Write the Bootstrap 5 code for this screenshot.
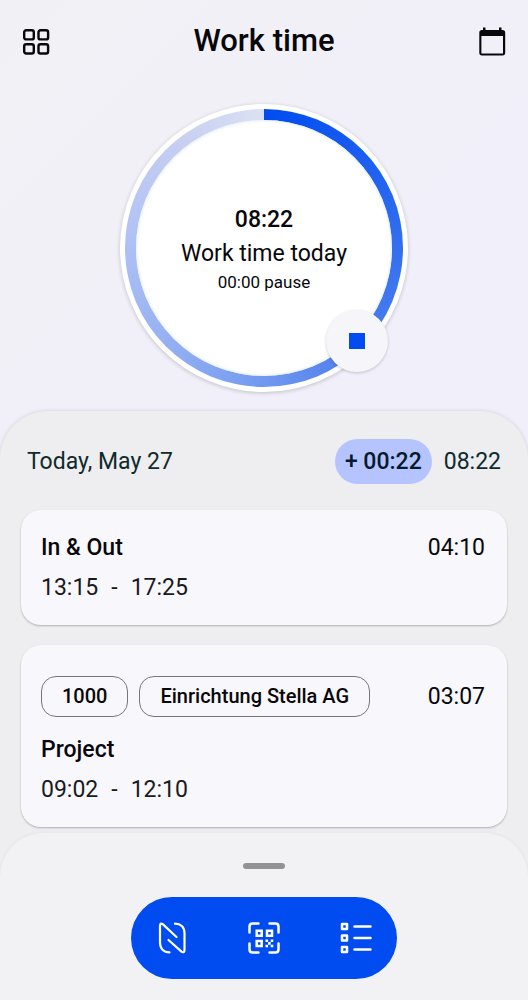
<!DOCTYPE html>
<html lang="en">
<head>
<meta charset="utf-8">
<meta name="viewport" content="width=device-width, initial-scale=1">
<title>Work time</title>
<link href="https://cdn.jsdelivr.net/npm/bootstrap@5.3.0/dist/css/bootstrap.min.css" rel="stylesheet">
<style>
  :root { --brand: #004cf0; }
  body { font-family: Roboto, "Liberation Sans", sans-serif; font-size: 23px; line-height: 40px; color: #08080b; background: linear-gradient(135deg, #f1f1f5, #f1effa 50%, #f1effa); }
  .fw-mid { font-weight: 500; }
  .icon-btn { width: 40px; height: 40px; padding: 4px; border: 0; color: #08080b; }
  .icon-btn svg, .dock-btn svg { display: block; width: 32px; height: 32px; }
  .app-title { font-size: 31px; line-height: 38px; font-weight: 500; }
  .top-bar { padding: 22px 16px 18px; }
  .dial { width: 288px; height: 288px; padding: 5px; background: #fff; box-shadow: 0 1px 4px #0003; margin-bottom: 19px; }
  .dial-ring { padding: 11px; background: conic-gradient(#004cf0, #1a5df0 45deg, #3a73ee 100deg, #5281ee 145deg, #7a9ff0 190deg, #95b0f2 225deg, #b0c2f4 275deg, #c6cef2 320deg, #dbe1f3 360deg); }
  .dial-face { background: #fff; box-shadow: inset 0 0 3px 1px #e6effa; }
  .dial-note { font-size: 17px; line-height: 22px; }
  .dial-line { line-height: 34px; }
  .stop-btn { right: 20px; bottom: 20px; width: 62px; height: 62px; border: 0; padding: 0; background: #f6f5f9; box-shadow: 0 1px 3px #0003; }
  .stop-btn:hover { background: #eeedf4; }
  .stop-mark { width: 16px; height: 16px; background: var(--brand); }
  .sheet { background: #eeedef; border-radius: 48px 48px 0 0; box-shadow: 0 0 4px #0002; }
  .day-row { padding: 28px 27px 26px; color: #0e2a2b; gap: 12px; }
  .day-title { font-size: 23px; line-height: 40px; }
  .balance { background: #b5c4ff; color: #061a2e; padding: 2px 10px; line-height: 41px; }
  .entries { padding: 0 21px 5px; gap: 20px; }
  .entry { border: 0; border-radius: 20px; background: #f8f7fb; padding: 18px 22px 17px 20px; box-shadow: 0 1px 2px #0004; color: inherit; }
  .entry-tagged { padding-top: 31px; }
  .span-row { gap: 13px; color: #1a1a1d; }
  .chip { border: 1px solid #77777a; border-radius: 15px; padding: 0 20px; font-size: 20px; line-height: 39px; }
  .tag-row { gap: 11px; margin-bottom: 13px; }
  .bottom-sheet { background: #f2f1f3; border-radius: 44px 44px 0 0; box-shadow: 0 0 4px #0000000d; padding: 30px 0 21px; }
  .grip { width: 42px; height: 6px; background: #929294; margin-bottom: 28px; border: 0; padding: 0; }
  .dock { background: var(--brand); padding: 11px; gap: 32px; }
  .dock-btn { width: 60px; height: 60px; padding: 14px; border: 0; color: #fff; }
  .dock-btn:hover { color: #fff; opacity: .8; }
  .icon-btn:hover { opacity: .8; }
</style>
</head>
<body>
<div class="d-flex flex-column min-vh-100">
  <header class="top-bar d-flex align-items-start justify-content-between">
    <button type="button" class="btn icon-btn" aria-label="Menu">
      <svg viewBox="0 0 32 32" fill="none" stroke="currentColor" stroke-width="2.4"><rect x="4.2" y="4.2" width="9.6" height="9.2" rx="2"/><rect x="18.5" y="4.2" width="9.6" height="9.2" rx="2"/><rect x="4.2" y="18.3" width="9.6" height="9.2" rx="2"/><rect x="18.5" y="18.3" width="9.6" height="9.2" rx="2"/></svg>
    </button>
    <h1 class="app-title m-0">Work time</h1>
    <button type="button" class="btn icon-btn" aria-label="Calendar">
      <svg viewBox="0 0 32 32"><path fill="currentColor" fill-rule="evenodd" d="M7 1.500h2.500v2.500h13.500v-2.500h2.500v2.500h1a2.700 2.700 0 0 1 2.700 2.700v20a2.700 2.700 0 0 1-2.700 2.700h-20.500a2.700 2.700 0 0 1-2.700-2.700v-20a2.700 2.700 0 0 1 2.700-2.700h1zM5.400 10v17.500h21.600v-17.500z"/></svg>
    </button>
  </header>

  <section class="dial position-relative rounded-circle mx-auto mt-4 flex-shrink-0" aria-label="Work time today">
    <div class="dial-ring rounded-circle h-100">
      <div class="dial-face rounded-circle h-100 d-flex flex-column align-items-center justify-content-center">
        <div class="dial-line fw-mid">08:22</div>
        <div class="dial-line">Work time today</div>
        <div class="dial-note">00:00 pause</div>
      </div>
    </div>
    <button type="button" class="btn stop-btn rounded-circle position-absolute d-flex align-items-center justify-content-center" aria-label="Stop"><span class="stop-mark"></span></button>
  </section>

  <main class="sheet flex-grow-1 d-flex flex-column">
    <div class="day-row d-flex align-items-center">
      <h2 class="day-title m-0 me-auto fw-normal">Today, May 27</h2>
      <span class="balance fw-mid rounded-pill">+ 00:22</span>
      <span>08:22</span>
    </div>
    <div class="entries d-flex flex-column">
      <article class="card entry">
        <div class="d-flex justify-content-between"><span class="fw-mid">In &amp; Out</span><span>04:10</span></div>
        <div class="span-row d-flex"><span>13:15</span><span>-</span><span>17:25</span></div>
      </article>
      <article class="card entry entry-tagged">
        <div class="tag-row d-flex align-items-center">
          <span class="chip fw-mid">1000</span>
          <span class="chip fw-mid">Einrichtung Stella AG</span>
          <span class="ms-auto">03:07</span>
        </div>
        <div class="fw-mid">Project</div>
        <div class="span-row d-flex"><span>09:02</span><span>-</span><span>12:10</span></div>
      </article>
    </div>
    <footer class="bottom-sheet mt-auto d-flex flex-column align-items-center">
      <button type="button" class="grip rounded-pill" aria-label="Expand"></button>
      <nav class="dock d-flex rounded-pill" aria-label="Clocking">
        <button type="button" class="btn dock-btn" aria-label="NFC">
          <svg viewBox="0 0 32 32" fill="none" stroke="currentColor" stroke-width="2.200" stroke-linecap="round" stroke-linejoin="round"><path d="M20.500 15L7 2.400Q4 .5 4 3.800V20.500C4 27 8 30.300 13.500 30.300M12.500 18L25.500 29.600Q28.500 31.500 28.500 28V11.500C28.500 5 24.500 1.700 19 1.700"/></svg>
        </button>
        <button type="button" class="btn dock-btn" aria-label="Scan QR code">
          <svg viewBox="0 0 32 32" fill="none" stroke="currentColor" stroke-width="2.500"><path stroke-linecap="round" stroke-linejoin="round" d="M1.500 10.500V4.500Q1.500 1.500 4.500 1.500H10.500M21.500 1.500H27.500Q30.500 1.500 30.500 4.500V10.500M30.500 21.500V27.500Q30.500 30.500 27.500 30.500H21.500M10.500 30.500H4.500Q1.500 30.500 1.500 27.500V21.500"/><path d="M8.700 8.700h5v5h-5zM19 8.700h5v5h-5zM8.700 19h5v5h-5z"/><path fill="currentColor" stroke="none" d="M17.500 17.500h2.600v2.600h-2.600zM22.700 17.500h2.600v2.600h-2.600zM20.100 20.100h2.600v2.600h-2.600zM17.500 22.700h2.600v2.600h-2.600zM22.700 22.700h2.600v2.600h-2.600z"/></svg>
        </button>
        <button type="button" class="btn dock-btn" aria-label="Projects">
          <svg viewBox="0 0 32 32" fill="none" stroke="currentColor" stroke-width="2.500" stroke-linejoin="round"><path d="M2 2h5v5h-5zM2 13.500h5v5h-5zM2 25h5v5h-5z"/><path stroke-linecap="round" d="M14.500 4.500H30.500M14.500 16H30.500M14.500 27.500H30.500"/></svg>
        </button>
      </nav>
    </footer>
  </main>
</div>
<script src="https://cdn.jsdelivr.net/npm/bootstrap@5.3.0/dist/js/bootstrap.bundle.min.js"></script>
</body>
</html>
